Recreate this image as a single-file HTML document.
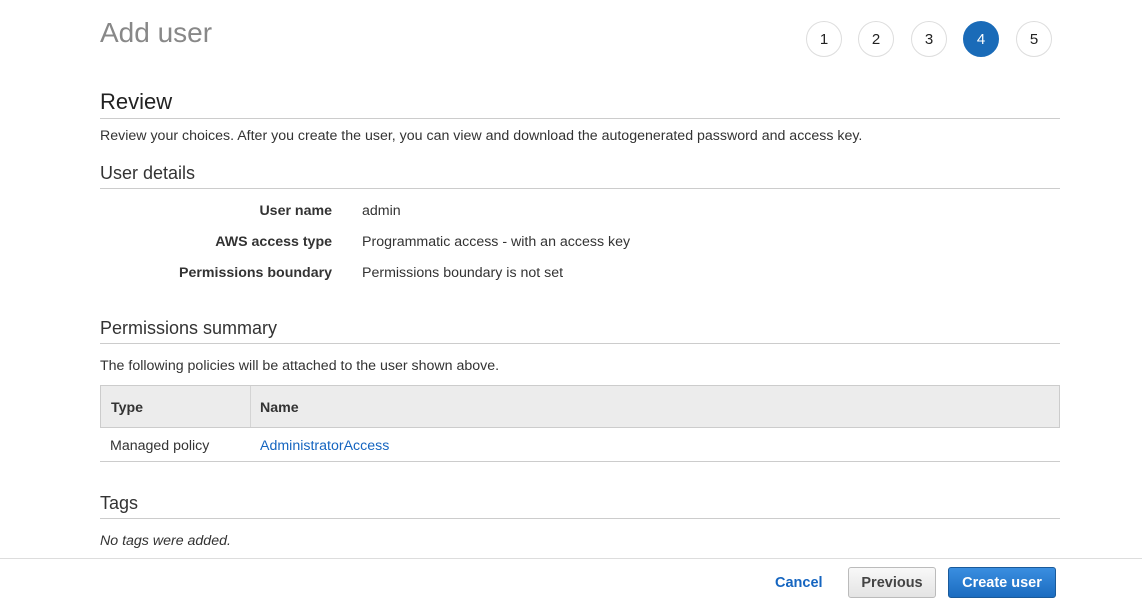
<!DOCTYPE html>
<html><head><meta charset="utf-8"><style>
*{margin:0;padding:0;box-sizing:border-box}
body{width:1142px;height:599px;overflow:hidden;background:#fff;font-family:"Liberation Sans",Arial,sans-serif;color:#333;position:relative}
.a{position:absolute}
.h1{left:100px;top:17px;font-size:28px;color:#888}
.step{top:21px;width:36px;height:36px;border-radius:50%;border:1px solid #ddd;text-align:center;line-height:36px;font-size:15px;color:#222}
.h2{left:100px;font-size:22px;color:#222}
.h3{left:100px;font-size:18px;color:#333}
.rule{left:100px;width:960px;height:1px;background:#ccc}
.t{font-size:14.2px}
.lbl{right:810px;font-weight:bold;font-size:14.2px;text-align:right}
.val{left:362px;font-size:14.2px}
</style></head><body>
<div class="a h1">Add user</div>
<div class="a step" style="left:806px">1</div>
<div class="a step" style="left:858px">2</div>
<div class="a step" style="left:911px">3</div>
<div class="a step" style="left:963px;background:#1a6bb8;border-color:#1a6bb8;color:#fff">4</div>
<div class="a step" style="left:1016px">5</div>

<div class="a h2" style="top:89px">Review</div>
<div class="a rule" style="top:118px"></div>
<div class="a t" style="left:100px;top:128px">Review your choices. After you create the user, you can view and download the autogenerated password and access key.</div>

<div class="a h3" style="top:163px">User details</div>
<div class="a rule" style="top:188px"></div>
<div class="a lbl" style="top:203px">User name</div><div class="a val" style="top:203px">admin</div>
<div class="a lbl" style="top:234px">AWS access type</div><div class="a val" style="top:234px">Programmatic access - with an access key</div>
<div class="a lbl" style="top:265px">Permissions boundary</div><div class="a val" style="top:265px">Permissions boundary is not set</div>

<div class="a h3" style="top:318px">Permissions summary</div>
<div class="a rule" style="top:343px"></div>
<div class="a t" style="left:100px;top:358px">The following policies will be attached to the user shown above.</div>
<div class="a" style="left:100px;top:385px;width:960px;height:43px;background:#ececec;border:1px solid #ccc"></div>
<div class="a" style="left:250px;top:386px;width:1px;height:41px;background:#d4d4d4"></div>
<div class="a t" style="left:111px;top:400px;font-weight:bold">Type</div>
<div class="a t" style="left:260px;top:400px;font-weight:bold">Name</div>
<div class="a t" style="left:110px;top:438px">Managed policy</div>
<div class="a t" style="left:260px;top:438px;color:#1565c0">AdministratorAccess</div>
<div class="a rule" style="top:461px"></div>

<div class="a h3" style="top:493px">Tags</div>
<div class="a rule" style="top:518px"></div>
<div class="a t" style="left:100px;top:533px;font-style:italic">No tags were added.</div>

<div class="a" style="left:0;top:558px;width:1142px;height:1px;background:#ddd"></div>
<div class="a" style="left:775px;top:575px;font-size:14.5px;font-weight:bold;color:#1565c0">Cancel</div>
<div class="a" style="left:848px;top:567px;width:88px;height:31px;border:1px solid #bbb;border-radius:3px;background:linear-gradient(#f8f8f8,#e4e4e4);text-align:center;line-height:30px;font-size:14.5px;font-weight:bold;color:#444">Previous</div>
<div class="a" style="left:948px;top:567px;width:108px;height:31px;border:1px solid #1a5a9a;border-radius:3px;background:linear-gradient(#3a8ee0,#1b6cc0);text-align:center;line-height:30px;font-size:14.5px;font-weight:bold;color:#fff">Create user</div>
</body></html>
